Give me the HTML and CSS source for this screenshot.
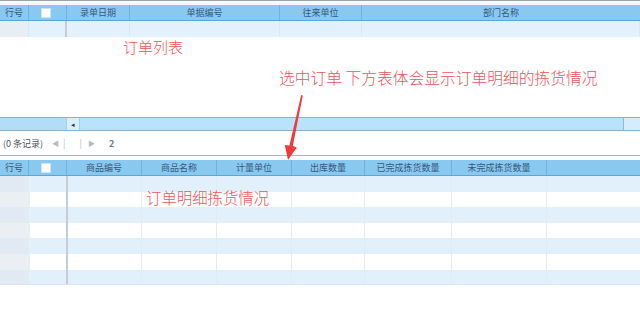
FILE: index.html
```html
<!DOCTYPE html>
<html>
<head>
<meta charset="utf-8">
<link rel="stylesheet" href="styles.css">
</head>
<body>
<div class="page">
  <div class="top-edge"></div>
  <div class="grid grid-top">
    <div class="head">
      <div class="c c-no">行号</div>
      <div class="c c-chk"><span class="box"></span></div>
      <div class="c w63">录单日期</div>
      <div class="c w150">单据编号</div>
      <div class="c w82">往来单位</div>
      <div class="c fill">部门名称</div>
    </div>
    <div class="row blue">
      <div class="c c-no"></div>
      <div class="c c-chk thick"></div>
      <div class="c w63"></div>
      <div class="c w150"></div>
      <div class="c w82"></div>
      <div class="c fill"></div>
    </div>
  </div>
  <div class="empty"></div>
  <div class="scroll">
    <div class="sc-left"></div>
    <div class="sc-btn">&#9666;</div>
    <div class="sc-track"></div>
    <div class="sc-end"></div>
  </div>
  <div class="pager">
    <span class="count">(0 条记录)</span>
    <span class="nav">&#9664;</span>
    <span class="nav bar">|</span>
    <span class="nav bar gap">|</span>
    <span class="nav">&#9654;</span>
    <span class="nav refresh">2</span>
  </div>
  <div class="grid grid-bottom">
    <div class="head">
      <div class="c c-no">行号</div>
      <div class="c c-chk"><span class="box"></span></div>
      <div class="c w75">商品编号</div>
      <div class="c w75">商品名称</div>
      <div class="c w75">计量单位</div>
      <div class="c w73">出库数量</div>
      <div class="c w87">已完成拣货数量</div>
      <div class="c w95">未完成拣货数量</div>
      <div class="c fill"></div>
    </div>
    <div class="rows"></div>
  </div>

  <div class="note note-list">订单列表</div>
  <div class="note note-tip">选中订单 下方表体会显示订单明细的拣货情况</div>
  <div class="note note-detail">订单明细拣货情况</div>
  <svg class="arrow" width="640" height="309" viewBox="0 0 640 309">
    <polygon points="301.2,95 302.8,95.4 292.8,146 296.8,147.5 288,160 284.8,145 289.4,145.5" fill="#ee3b3b"/>
  </svg>
</div>
</body>
</html>
```
FILE: styles.css
```css
* { box-sizing: border-box; }
html, body { margin: 0; padding: 0; background: #fff; }
body {
  font-family: "Noto Sans CJK SC", "Noto Sans", sans-serif;
  width: 640px;
  height: 309px;
  overflow: hidden;
}
.page { position: relative; width: 640px; height: 309px; }
.top-edge {
  height: 5px;
  border-top: 1px solid #97a6b2;
  background: #f7fafc;
}
.grid { display: flex; flex-direction: column; }
.head {
  display: flex;
  height: 16px;
  background: #89c8ef;
  border-bottom: 1px solid #5ea4d4;
}
.head .c {
  font-size: 9px;
  line-height: 15px;
  color: #35597d;
  text-align: center;
  border-right: 1px solid #6eb2de;
  white-space: nowrap;
  overflow: hidden;
}
.head .c.fill { border-right: none; }
.c { flex: none; height: 100%; }
.c-no { width: 29px; }
.c-chk { width: 38px; display: flex; align-items: center; justify-content: center; }
.w63 { width: 63px; }
.w150 { width: 150px; }
.w82 { width: 82px; }
.w75 { width: 75px; }
.w73 { width: 73px; }
.w87 { width: 87px; }
.w95 { width: 95px; }
.fill { flex: 1 1 auto; }
.box {
  display: block;
  width: 10px;
  height: 10px;
  background: #fbfdff;
  border: 1px solid #cfe3f2;
  margin-left: -4px;
}
.row {
  display: flex;
  height: 16px;
  background: #e3f1fc;
}
.row .c { border-right: 1px solid #d8e8f4; }
.row .c-no { background: #e7eef4; }
.row .thick { border-right: 2px solid #c4ccd4; }
.empty { height: 80px; }
.scroll {
  display: flex;
  height: 14px;
  border-top: 1px solid #86b3d2;
  border-bottom: 1px solid #86b3d2;
  background: #b6e1fa;
}
.sc-left { width: 66px; background: #b3ddf7; }
.sc-btn {
  width: 14px;
  background: #d8effc;
  color: #1f3a55;
  font-size: 7px;
  line-height: 12px;
  text-align: center;
  border-left: 1px solid #a7cfe8;
  border-right: 1px solid #a7cfe8;
}
.sc-track { flex: 1; background: #b9e3fb; border-right: 1px solid #8fb9d6; }
.sc-end { width: 16px; background: #d6ecfa; }
.pager {
  display: flex;
  align-items: center;
  height: 25px;
  padding-left: 3px;
  border-bottom: 1px solid #aab8c3;
  color: #4a5560;
  font-size: 9px;
}
.count { margin-right: 9px; }
.nav { color: #b4bcc4; font-size: 7px; margin-right: 4px; }
.nav.bar { font-size: 9px; }
.nav.gap { margin-left: 10px; margin-right: 6px; }
.nav.refresh { color: #6a7a88; font-size: 9px; font-weight: bold; margin-left: 10px; }
.grid-bottom { margin-top: 4px; }
.rows {
  height: 109px;
  border-bottom: 1px solid #d9e5ee;
  background:
    linear-gradient(to right,
      transparent 0, transparent 29px, #e9f0f5 29px, #e9f0f5 30px,
      transparent 30px, transparent 66px, #c4ccd4 66px, #c4ccd4 68px,
      transparent 68px, transparent 141px, #e3ebf2 141px, #e3ebf2 142px,
      transparent 142px, transparent 216px, #e3ebf2 216px, #e3ebf2 217px,
      transparent 217px, transparent 291px, #e3ebf2 291px, #e3ebf2 292px,
      transparent 292px, transparent 364px, #e3ebf2 364px, #e3ebf2 365px,
      transparent 365px, transparent 451px, #e3ebf2 451px, #e3ebf2 452px,
      transparent 452px, transparent 546px, #e3ebf2 546px, #e3ebf2 547px,
      transparent 547px),
    linear-gradient(to right, rgba(225,232,238,0.7) 0, rgba(225,232,238,0.7) 29px, transparent 29px),
    repeating-linear-gradient(to bottom, #e2f0fc 0, #e2f0fc 15.6px, #ffffff 15.6px, #ffffff 31.2px);
}
.note {
  position: absolute;
  color: #e9565b;
  font-size: 15px;
  font-weight: 300;
  line-height: 16px;
  white-space: nowrap;
}
.note-list { left: 123px; top: 39px; }
.note-tip { left: 279px; top: 70px; font-size: 15.75px; }
.note-detail { left: 146px; top: 189px; font-size: 15.4px; }
.arrow { position: absolute; left: 0; top: 0; pointer-events: none; }
```
